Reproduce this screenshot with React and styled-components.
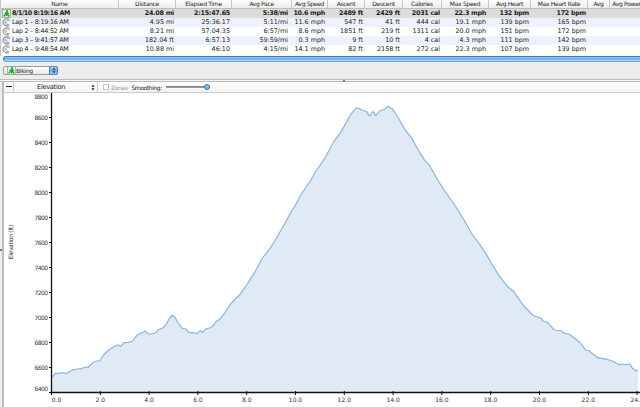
import React, { useState } from 'react';
import styled, { createGlobalStyle } from 'styled-components';

const GlobalStyle = createGlobalStyle`
  * {
    box-sizing: border-box;
  }

  body {
    margin: 0;
    background: #ededed;
    font-family: 'DejaVu Sans', Verdana, sans-serif;
    overflow: hidden;
  }
`;

const Window = styled.div`
  width: 640px;
  height: 407px;
  display: flex;
  flex-direction: column;
  overflow: hidden;
  color: #1c1c1c;
`;

const Table = styled.div`
  height: 56px;
  flex: none;
  background: white;
  border-left: 1px solid #c4c4c4;
`;

const columnWidths = '118px 57px 56px 60px 36px 37px 38px 39px 47px 42px 57px 22px 34px';

const HeaderRow = styled.div`
  display: grid;
  grid-template-columns: ${columnWidths};
  height: 9px;
  width: 643px;
  background: linear-gradient(#fdfdfd, #ececec);
  border-bottom: 1px solid #bdbdbd;
`;

const HeaderCell = styled.div`
  border-right: 1px solid #c6c6c6;
  text-align: center;
  font-size: 6px;
  line-height: 8px;
  letter-spacing: -0.3px;
  white-space: nowrap;
`;

const Row = styled.div`
  display: grid;
  grid-template-columns: ${columnWidths};
  height: 9px;
  width: 643px;
  font-size: 6.4px;
  line-height: 9px;
  font-weight: ${props => (props.$selected ? 'bold' : 'normal')};
  letter-spacing: ${props => (props.$selected ? '-0.27px' : '0')};
  background: ${props => {
    if (props.$selected) return '#dcdcdc';
    return props.$striped ? '#edf3fe' : 'white';
  }};
`;

const NameCell = styled.div`
  display: flex;
  align-items: center;
  gap: 1px;
  padding-left: 1px;
  letter-spacing: ${props => (props.$selected ? '-0.45px' : '-0.27px')};
  white-space: nowrap;
`;

const Cell = styled.div`
  text-align: right;
  padding-right: ${props => props.$pad}px;
  white-space: nowrap;
`;

const ScrollTrack = styled.div`
  height: 6px;
  flex: none;
  padding-left: 3px;
  background: #f4f4f4;
`;

const ScrollThumb = styled.div`
  height: 6px;
  width: 650px;
  border: 1px solid #4778c4;
  border-bottom-color: #7d9fc9;
  border-radius: 3px;
  background: linear-gradient(#a5cdf8 0%, #62a8ee 45%, #7ec0f9 65%, #b4e4ff 100%);
`;

const ActivityBar = styled.div`
  height: 17px;
  flex: none;
  padding: 4px 0 0 3px;
  background: #ededed;
`;

const ActivitySelect = styled.div`
  display: flex;
  align-items: center;
  width: 55px;
  height: 9px;
  padding-left: 3px;
  border: 1px solid #999;
  border-radius: 2px;
  background: linear-gradient(white, #e8e8e8);
  font-size: 6px;
  letter-spacing: -0.3px;
`;

const SelectArrows = styled.div`
  display: flex;
  align-items: center;
  justify-content: center;
  width: 9px;
  height: 9px;
  margin: -1px -1px -1px auto;
  border: 1px solid #5580b8;
  border-radius: 0 2px 2px 0;
  background: linear-gradient(#b5d4f6, #67a9ea 50%, #a2d4fb);
`;

const Splitter = styled.div`
  display: flex;
  align-items: center;
  justify-content: center;
  height: 3px;
  flex: none;
  padding-left: 48px;
  border-top: 1px solid #bcbcbc;
  border-bottom: 1px solid #bcbcbc;
  background: #f4f4f4;
`;

const SplitterDot = styled.div`
  width: 2px;
  height: 2px;
  border-radius: 1px;
  background: #666;
`;

const Lower = styled.div`
  display: flex;
  flex: 1;
  min-height: 0;
`;

const SideHandle = styled.div`
  display: flex;
  align-items: center;
  width: 4px;
  flex: none;
  background: #ededed;
  border-right: 2px solid #bdbdbd;
`;

const SideDot = styled.div`
  width: 2px;
  height: 2px;
  margin-top: 11px;
  background: #777;
`;

const ChartPanel = styled.div`
  flex: 1;
  background: white;
`;

const ChartToolbar = styled.div`
  display: flex;
  align-items: center;
  height: 11px;
  border-bottom: 1px solid #ccc;
  background: linear-gradient(white, #f2f2f2);
  font-size: 6px;
  letter-spacing: -0.4px;
`;

const CollapseButton = styled.button`
  display: flex;
  align-items: center;
  justify-content: center;
  width: 10px;
  height: 10px;
  padding: 0 0 1px;
  border: none;
  border-right: 1px solid #ccc;
  background: none;

  &::before {
    content: '';
    width: 6px;
    height: 1px;
    background: #222;
  }
`;

const MetricSelect = styled.div`
  display: flex;
  align-items: center;
  width: 84px;
  height: 10px;
  padding: 0 2px 0 23px;
  justify-content: space-between;
  border-right: 1px solid #ccc;
  font-size: 6.7px;
  letter-spacing: -0.33px;
`;

const ZonesLabel = styled.label`
  display: flex;
  align-items: center;
  gap: 2px;
  margin-left: 5px;
  color: #999;
`;

const ZonesBox = styled.span`
  width: 6px;
  height: 6px;
  border: 1px solid #c4c4c4;
  background: white;
`;

const SmoothingLabel = styled.span`
  margin-left: 4px;
`;

const Slider = styled.div`
  display: flex;
  align-items: center;
  justify-content: flex-end;
  width: 44px;
  height: 6px;
  margin-left: 4px;
  background: linear-gradient(transparent 33%, #777 33%, #a9a9a9 67%, transparent 67%);
`;

const SliderKnob = styled.div`
  width: 6px;
  height: 6px;
  border: 1px solid #3f74ba;
  border-radius: 50%;
  background: #7fb8f2;
`;

const Chart = styled.svg`
  display: block;
  font-family: 'DejaVu Sans', Verdana, sans-serif;
  font-size: 6px;
  fill: #333;
`;

const columns = [
  { title: 'Name' },
  { title: 'Distance', pad: 2 },
  { title: 'Elapsed Time', pad: 2 },
  { title: 'Avg Pace', pad: 4 },
  { title: 'Avg Speed', pad: 3 },
  { title: 'Ascent', pad: 2 },
  { title: 'Descent', pad: 3 },
  { title: 'Calories', pad: 2 },
  { title: 'Max Speed', pad: 3 },
  { title: 'Avg Heart', pad: 2 },
  { title: 'Max Heart Rate', pad: 2 },
  { title: 'Avg', pad: 2 },
  { title: 'Avg Power', pad: 2 },
];

const activities = [
  ['8/1/10 8:19:16 AM', '24.08 mi', '2:15:47.65', '5:38/mi', '10.6 mph', '2489 ft', '2429 ft', '2031 cal', '22.3 mph', '132 bpm', '172 bpm'],
  ['Lap 1 – 8:19:16 AM', '4.95 mi', '25:36.17', '5:11/mi', '11.6 mph', '547 ft', '41 ft', '444 cal', '19.1 mph', '139 bpm', '165 bpm'],
  ['Lap 2 – 8:44:52 AM', '8.21 mi', '57:04.35', '6:57/mi', '8.6 mph', '1851 ft', '219 ft', '1311 cal', '20.0 mph', '151 bpm', '172 bpm'],
  ['Lap 3 – 9:41:57 AM', '182.04 ft', '6:57.13', '59:59/mi', '0.3 mph', '9 ft', '10 ft', '4 cal', '4.3 mph', '111 bpm', '142 bpm'],
  ['Lap 4 – 9:48:54 AM', '10.88 mi', '46:10', '4:15/mi', '14.1 mph', '82 ft', '2158 ft', '272 cal', '22.3 mph', '107 bpm', '139 bpm'],
];

// x, y in chart pixels
const profile = [
  [47.7, 285.3], [49, 283], [51.3, 280.3], [56, 280.3], [59.3, 279.5], [62.7, 280.6], [67.7, 277.3],
  [72.7, 276], [77.7, 275.6], [81, 274], [84, 274.3], [89.3, 269.3], [92.7, 268], [96, 267.7],
  [98.7, 263], [103.3, 258], [109.3, 254], [114, 252], [116.7, 253.3], [120, 249.7], [124.3, 249.3],
  [128.3, 248.3], [133.3, 242], [137.7, 240], [141, 238], [144.7, 241], [151, 240.3], [154.3, 236.7],
  [159.3, 234.7], [162.7, 230.3], [166, 224.3], [168.3, 222.3], [171, 224.3], [174.3, 230],
  [178.3, 235.3], [181.7, 236], [185, 239.7], [189.3, 239.7], [192.7, 240.7], [196, 237.7],
  [198.7, 239.3], [201.7, 236], [206, 234.7], [209.3, 232.7], [212, 228.7], [216, 226], [219.3, 222],
  [225.3, 212.7], [231, 206], [235.3, 202.3], [242.7, 192], [251, 178.7], [257.7, 166],
  [265.3, 156.3], [272, 146], [283, 126.5], [287, 119], [291, 113], [297, 101.5], [306.3, 88], [312, 78],
  [319.3, 67.7], [326, 55.7], [330, 48.3], [336.7, 39.3], [342.7, 28.7], [346.7, 21.3], [352, 15.3],
  [355, 15.3], [357.7, 17], [362.7, 18.7], [364.7, 22], [366.3, 23], [368.7, 18.7], [370, 19.3],
  [371.7, 22.7], [376, 17.7], [381, 16.3], [384, 13.3], [388.7, 16.3], [393.7, 23.7], [401, 36.7],
  [407.3, 44.7], [414.3, 57], [420.7, 67.3], [425.3, 72], [433.3, 86.3], [440, 97], [449.5, 110],
  [460, 127], [468, 141], [475, 150.5], [481.7, 160.3], [486.7, 169], [492.7, 179], [496.7, 185],
  [504.3, 194.3], [509.3, 198], [514.3, 205.3], [521, 214.3], [525, 218], [528.3, 222], [533.3, 224],
  [536.7, 225], [539.3, 228], [543.7, 229.7], [550.3, 237], [557.7, 238], [560.3, 240.3],
  [565.3, 241.3], [575, 248.7], [579.3, 253.7], [581.7, 257.3], [585, 257.7], [593.7, 264.7],
  [602.7, 266.3], [608.3, 268], [615.3, 271.7], [618.3, 271], [622, 272], [625.7, 271],
  [628.3, 275], [632, 278.3], [634, 277.3],
];

const yLabels = [8800, 8600, 8400, 8200, 8000, 7800, 7600, 7400, 7200, 7000, 6800, 6600, 6400];
const xLabels = ['0.0', '2.0', '4.0', '6.0', '8.0', '10.0', '12.0', '14.0', '16.0', '18.0', '20.0', '22.0', '24.0'];

const BikeIcon = () => (
  <svg width="9" height="9" viewBox="0 0 9 9">
    <rect x="0.5" y="0.5" width="8" height="8" fill="#e5f3e5" stroke="#7aa67e" strokeWidth="0.7" />
    <circle cx="5" cy="2" r="1" fill="#129a28" />
    <path d="M4.7 3L3 5L5 5.2L4 7.3M4.8 3.2L6.8 5M5.5 5.5L7.2 7.5M1.5 7.3L3 6.2" fill="none" stroke="#129a28" strokeWidth="1.2" />
  </svg>
);

const LapIcon = () => (
  <svg width="9" height="9" viewBox="0 0 9 9">
    <path d="M7.5 1.3C4 0 1 1.5 1 4.3C1 6.8 3.5 8.5 6.8 7.7" fill="none" stroke="#777" strokeWidth="1" />
    <path d="M7.8 2.6C5 1.8 2.7 3 3.2 5C3.6 6.4 5.3 7 7.5 6.2M1.5 2.3L5.5 5.3" fill="none" stroke="#999" strokeWidth="0.8" />
  </svg>
);

const UpDownArrows = ({ color }) => (
  <svg width="4" height="7" viewBox="0 0 4 7">
    <path d="M0.5 2.8L2 0.5L3.5 2.8ZM0.5 4.2L2 6.5L3.5 4.2Z" fill={color} />
  </svg>
);

function ElevationChart() {
  const line = profile.map(([x, y]) => `${x},${y}`).join(' ');

  return (
    <Chart width="636" height="314" viewBox="0 0 636 314">
      <polygon points={`47.5,299 ${line} 634,299`} fill="#e0eaf5" />
      <polyline points={line} fill="none" stroke="#86b3e1" strokeWidth="1.2" />
      <path d="M47.5 0V300M46 299.5H636" stroke="#111" strokeWidth="1.3" />
      {yLabels.map((label, i) => {
        let y = i * 25 + 2;
        if (i === 0) y = 6;
        if (i === yLabels.length - 1) y = 298;
        return (
          <g key={label}>
            <path d={`M45 ${i * 25 - 0.5}H48`} stroke="#111" />
            <text x="44" y={y} textAnchor="end" textLength="13.5">{label}</text>
          </g>
        );
      })}
      {xLabels.map((label, i) => (
        <g key={label}>
          <path d={`M${47.5 + i * 48.8} 298V302`} stroke="#111" />
          <text x={i === 0 ? 52.5 : 47.5 + i * 48.8} y="309" textAnchor="middle">{label}</text>
        </g>
      ))}
      <text transform="translate(8.5 149) rotate(-90)" textAnchor="middle" textLength="34.5">Elevation (ft)</text>
    </Chart>
  );
}

function App() {
  const [selected, setSelected] = useState(0);

  return (
    <Window>
      <GlobalStyle />
      <Table>
        <HeaderRow>
          {columns.map((column) => (
            <HeaderCell key={column.title}>{column.title}</HeaderCell>
          ))}
        </HeaderRow>
        {activities.map(([name, ...values], index) => (
          <Row
            key={name}
            $selected={index === selected}
            $striped={index % 2 === 1}
            onClick={() => setSelected(index)}
          >
            <NameCell $selected={index === selected}>
              {index === 0 ? <BikeIcon /> : <LapIcon />}
              {name}
            </NameCell>
            {values.map((value, i) => (
              <Cell key={columns[i + 1].title} $pad={columns[i + 1].pad}>{value}</Cell>
            ))}
          </Row>
        ))}
      </Table>
      <ScrollTrack>
        <ScrollThumb />
      </ScrollTrack>
      <ActivityBar>
        <ActivitySelect>
          <BikeIcon />
          Biking
          <SelectArrows><UpDownArrows color="#1d3f70" /></SelectArrows>
        </ActivitySelect>
      </ActivityBar>
      <Splitter><SplitterDot /></Splitter>
      <Lower>
        <SideHandle><SideDot /></SideHandle>
        <ChartPanel>
          <ChartToolbar>
            <CollapseButton />
            <MetricSelect>
              Elevation
              <UpDownArrows color="#222" />
            </MetricSelect>
            <ZonesLabel><ZonesBox />Zones</ZonesLabel>
            <SmoothingLabel>Smoothing:</SmoothingLabel>
            <Slider><SliderKnob /></Slider>
          </ChartToolbar>
          <ElevationChart />
        </ChartPanel>
      </Lower>
    </Window>
  );
}

export default App;
